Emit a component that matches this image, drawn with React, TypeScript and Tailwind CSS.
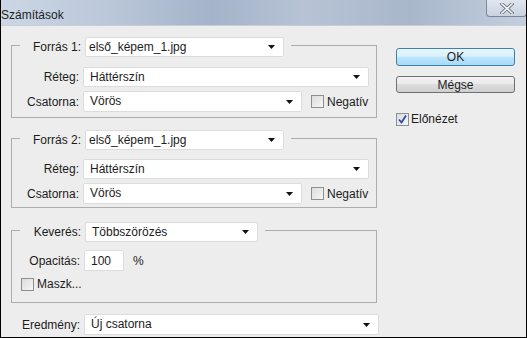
import React from "react";

const font = { fontFamily: '"Liberation Sans", Arial, sans-serif' };

function Arrow() {
  return (
    <svg width="7" height="4" viewBox="0 0 7 4" className="shrink-0">
      <polygon points="0,0 7,0 3.5,4" fill="#111" />
    </svg>
  );
}

function Select({ value, w, h = 20, pl = 6 }: { value: string; w: number; h?: number; pl?: number }) {
  return (
    <div
      className="flex items-center justify-between bg-white border border-[#dcdcdc] rounded-[2px] pr-[8px] shrink-0"
      style={{ width: w, height: h, paddingLeft: pl }}
    >
      <span className="whitespace-nowrap leading-[17px]">{value}</span>
      <Arrow />
    </div>
  );
}

function Check({ checked = false }: { checked?: boolean }) {
  return (
    <div className="w-[13px] h-[13px] border border-[#8e8f8f] bg-[linear-gradient(135deg,#dcdcdc,#f6f6f6)] flex items-center justify-center shrink-0">
      {checked && (
        <svg width="11" height="11" viewBox="0 0 11 11">
          <path d="M2 5.5 L4.5 8.5 L9 1.5" stroke="#2b4aa8" strokeWidth="1.8" fill="none" />
        </svg>
      )}
    </div>
  );
}

function Label({ text, w }: { text: string; w: number }) {
  return (
    <div className="text-right shrink-0 pr-[4px]" style={{ width: w }}>
      {text}
    </div>
  );
}

function SourceGroup({ n, mt, r2mt, pb }: { n: number; mt: string; r2mt: string; pb: string }) {
  return (
    <div className={`border border-[#adadad] ${mt} ${pb} w-[366px]`}>
      <div className="-mt-[9px] ml-[8px] w-[271px] h-[20px] bg-[#ededed] flex items-center">
        <Label text={`Forrás ${n}:`} w={65} />
        <Select value="első_képem_1.jpg" w={199} pl={3} />
      </div>
      <div className={`${r2mt} flex items-center h-[20px]`}>
        <Label text="Réteg:" w={71} />
        <Select value="Háttérszín" w={286} />
      </div>
      <div className="mt-[4px] flex items-center h-[21px]">
        <Label text="Csatorna:" w={71} />
        <Select value="Vörös" w={219} h={21} />
        <div className="ml-[9px] flex items-center gap-[3px]">
          <Check />
          <span>Negatív</span>
        </div>
      </div>
    </div>
  );
}

export default function App() {
  return (
    <div
      className="w-[527px] h-[338px] bg-[#ededed] border-x border-b border-black flex flex-col text-[12px] text-[#1c1c1c] overflow-hidden"
      style={font}
    >
      <div className="h-[26px] shrink-0 border-b border-[#c9cfd8] bg-[linear-gradient(90deg,#ccd7e5_0%,#b9c6d8_22%,#a4b3c9_40%,#b7c3d5_58%,#a9b7cb_78%,#c3cfdf_100%)] flex items-start justify-between">
        <span className="mt-[6px] ml-[0px] text-[#1e1e1e]">Számítások</span>
        <div className="w-[41px] h-[17px] -mr-[1px] border border-t-0 border-[#7b8698] rounded-b-[4px] bg-[linear-gradient(180deg,#dfe6ef,#c9d3e0)] flex items-center justify-center">
          <svg width="14" height="11" viewBox="0 0 14 11">
            <path d="M2 1 L12 10 M12 1 L2 10" stroke="#6d7785" strokeWidth="3.4" strokeLinecap="square" />
            <path d="M2 1 L12 10 M12 1 L2 10" stroke="#f4f6f9" strokeWidth="1.6" strokeLinecap="square" />
          </svg>
        </div>
      </div>
      <div className="flex pl-[10px]">
        <div className="w-[368px] flex flex-col">
          <SourceGroup n={1} mt="mt-[19px]" r2mt="mt-[10px]" pb="pb-[5px]" />
          <SourceGroup n={2} mt="mt-[20px]" r2mt="mt-[9px]" pb="pb-[3px]" />
          <div className="border border-[#adadad] mt-[22px] pb-[9px] w-[366px]">
            <div className="-mt-[9px] ml-[8px] w-[245px] h-[20px] bg-[#ededed] flex items-center">
              <Label text="Keverés:" w={65} />
              <Select value="Többszörözés" w={173} />
            </div>
            <div className="mt-[8px] flex items-center h-[21px]">
              <Label text="Opacitás:" w={72} />
              <div className="w-[40px] h-[21px] bg-white border border-[#dcdcdc] rounded-[2px] flex items-center pl-[6px]">100</div>
              <span className="ml-[9px]">%</span>
            </div>
            <div className="mt-[4px] ml-[9px] flex items-center gap-[3px]">
              <Check />
              <span>Maszk...</span>
            </div>
          </div>
          <div className="mt-[11px] flex items-center h-[21px]">
            <Label text="Eredmény:" w={73} />
            <Select value="Új csatorna" w={295} h={21} />
          </div>
        </div>
        <div className="ml-[17px] w-[119px] flex flex-col">
          <div className="mt-[22px] h-[18px] border border-[#3c7fb1] rounded-[3px] bg-[linear-gradient(180deg,#eaf6fd_0%,#d9f0fc_45%,#bee6fd_50%,#a7d9f5_100%)] flex items-center justify-center">
            OK
          </div>
          <div className="mt-[10px] h-[17px] border border-[#707070] rounded-[3px] bg-[linear-gradient(180deg,#f2f2f2_0%,#ebebeb_45%,#dddddd_50%,#cfcfcf_100%)] flex items-center justify-center">
            Mégse
          </div>
          <div className="mt-[17px] flex items-center gap-[2px]">
            <Check checked />
            <span>Előnézet</span>
          </div>
        </div>
      </div>
    </div>
  );
}
